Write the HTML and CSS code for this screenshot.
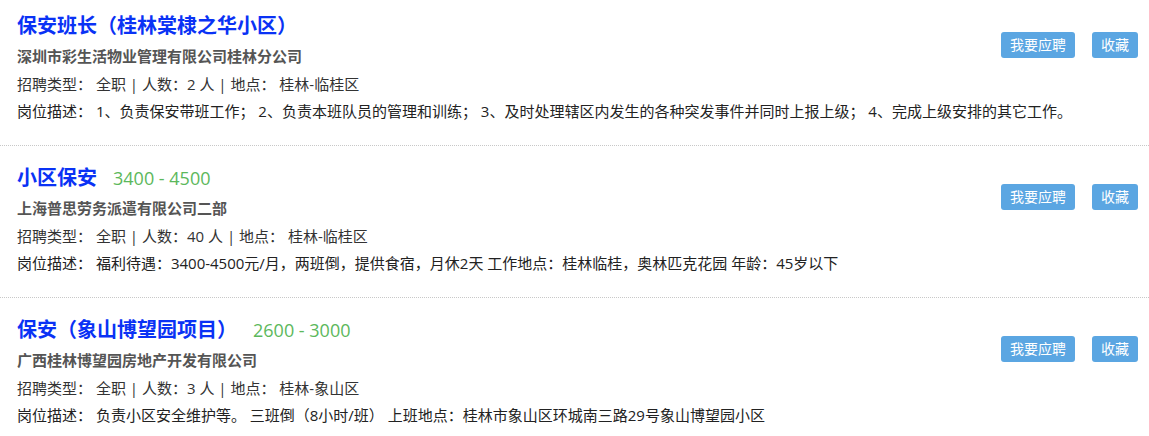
FILE: index.html
```html
<!DOCTYPE html>
<html lang="zh">
<head>
  <meta charset="UTF-8" />
  <meta name="viewport" content="width=device-width, initial-scale=1.0" />
  <title>招聘信息 - 保安岗位</title>
  <link rel="stylesheet" href="styles.css">
</head>
<body>
  <ul class="job-list">
    <li class="job">
      <h2 class="job-title"><a href="#">保安班长（桂林棠棣之华小区）</a></h2>
      <div class="company">深圳市彩生活物业管理有限公司桂林分公司</div>
      <div class="meta">招聘类型： 全职 | 人数：2 人 | 地点： 桂林-临桂区</div>
      <div class="desc">岗位描述： 1、负责保安带班工作； 2、负责本班队员的管理和训练； 3、及时处理辖区内发生的各种突发事件并同时上报上级； 4、完成上级安排的其它工作。</div>
      <div class="actions">
        <button class="btn">我要应聘</button>
        <button class="btn">收藏</button>
      </div>
    </li>

    <li class="job">
      <h2 class="job-title"><a href="#">小区保安</a><span class="salary">3400 - 4500</span></h2>
      <div class="company">上海普思劳务派遣有限公司二部</div>
      <div class="meta">招聘类型： 全职 | 人数：40 人 | 地点： 桂林-临桂区</div>
      <div class="desc">岗位描述： 福利待遇：3400-4500元/月，两班倒，提供食宿，月休2天 工作地点：桂林临桂，奥林匹克花园 年龄：45岁以下</div>
      <div class="actions">
        <button class="btn">我要应聘</button>
        <button class="btn">收藏</button>
      </div>
    </li>

    <li class="job">
      <h2 class="job-title"><a href="#">保安（象山博望园项目）</a><span class="salary">2600 - 3000</span></h2>
      <div class="company">广西桂林博望园房地产开发有限公司</div>
      <div class="meta">招聘类型： 全职 | 人数：3 人 | 地点： 桂林-象山区</div>
      <div class="desc">岗位描述： 负责小区安全维护等。 三班倒（8小时/班） 上班地点：桂林市象山区环城南三路29号象山博望园小区</div>
      <div class="actions">
        <button class="btn">我要应聘</button>
        <button class="btn">收藏</button>
      </div>
    </li>
  </ul>
</body>
</html>
```

FILE: styles.css
```css
* {
  box-sizing: border-box;
}
body {
  font-family: "Open Sans", "Noto Sans CJK SC", sans-serif;
  font-size: 15px;
  color: #333;
  background-color: #fff;
  margin: 0;
}
.job-list {
  list-style: none;
  margin: 0;
  padding: 0;
}
.job {
  display: grid;
  grid-template-columns: 1fr auto;
  padding: 16px 11px 21px 17px;
  border-bottom: 1px dotted #c8c8c8;
}
.job:first-child {
  padding-top: 10px;
}
.job:last-child {
  border-bottom: none;
}
.job-title {
  grid-column: 1;
  margin: 0;
  font-size: 20px;
  line-height: 32px;
  font-weight: bold;
}
.job-title a {
  color: #0a32f5;
  text-decoration: none;
}
.salary {
  margin-left: 16px;
  font-size: 18px;
  font-weight: normal;
  color: #5cb85c;
}
.company {
  grid-column: 1;
  font-weight: bold;
  color: #555;
  line-height: 28px;
}
.meta {
  grid-column: 1;
  line-height: 28px;
}
.desc {
  grid-column: 1 / -1;
  line-height: 26px;
  color: #222;
  white-space: nowrap;
}
.actions {
  grid-column: 2;
  grid-row: 1 / 4;
  display: flex;
  gap: 17px;
  margin-top: 22px;
}
.btn {
  height: 26px;
  padding: 0 9px;
  font-family: inherit;
  font-size: 14px;
  line-height: 26px;
  color: #fff;
  background-color: #5ba6e2;
  border: none;
  border-radius: 3px;
  cursor: pointer;
}
.btn:hover {
  background-color: #3d8fd1;
}
```
